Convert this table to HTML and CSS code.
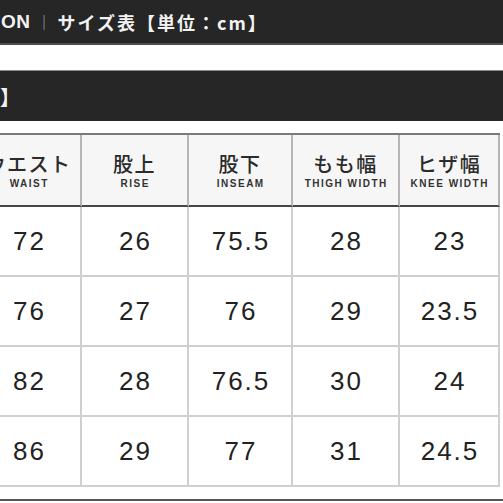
FILE: index.html
```html
<!DOCTYPE html>
<html lang="ja">
<head>
<meta charset="utf-8">
<link rel="stylesheet" href="styles.css">
</head>
<body>
<div class="page">
  <div class="topbar"><span class="brand">ON</span><span class="sep">｜</span><span class="title">サイズ表【単位：cm】</span></div>
  <div class="band"></div>
  <div class="bar2"><span class="bracket">】</span></div>
  <div class="table">
    <div class="cell head"><span class="jp">ウエスト</span><span class="en">WAIST</span></div>
    <div class="cell head"><span class="jp">股上</span><span class="en">RISE</span></div>
    <div class="cell head"><span class="jp">股下</span><span class="en">INSEAM</span></div>
    <div class="cell head"><span class="jp">もも幅</span><span class="en">THIGH WIDTH</span></div>
    <div class="cell head last"><span class="jp">ヒザ幅</span><span class="en">KNEE WIDTH</span></div>

    <div class="cell num">72</div>
    <div class="cell num">26</div>
    <div class="cell num">75.5</div>
    <div class="cell num">28</div>
    <div class="cell num last">23</div>

    <div class="cell num">76</div>
    <div class="cell num">27</div>
    <div class="cell num">76</div>
    <div class="cell num">29</div>
    <div class="cell num last">23.5</div>

    <div class="cell num">82</div>
    <div class="cell num">28</div>
    <div class="cell num">76.5</div>
    <div class="cell num">30</div>
    <div class="cell num last">24</div>

    <div class="cell num">86</div>
    <div class="cell num">29</div>
    <div class="cell num">77</div>
    <div class="cell num">31</div>
    <div class="cell num last">24.5</div>
  </div>
  <div class="footline"></div>
</div>
</body>
</html>
```
FILE: styles.css
```css
html, body {
  margin: 0;
  padding: 0;
  background: #ffffff;
  overflow: hidden;
}
.page {
  width: 503px;
  height: 503px;
  overflow: hidden;
  font-family: "Liberation Sans", "Noto Sans CJK JP", sans-serif;
}
.topbar {
  height: 43px;
  background: #262626;
  border-bottom: 2px solid #4d4d4d;
  display: flex;
  align-items: center;
  color: #f2f2f2;
  font-family: "Noto Sans CJK JP", sans-serif;
  font-weight: 700;
  font-size: 18px;
  white-space: nowrap;
}
.brand {
  font-family: "Liberation Sans", sans-serif;
  font-weight: 700;
  font-size: 19px;
  letter-spacing: 0.5px;
  margin-left: 1px;
}
.sep {
  color: #bbbbbb;
  font-weight: 300;
  font-size: 15px;
  margin: 0 6px 0 6px;
}
.title {
  letter-spacing: 2px;
}
.band {
  height: 25px;
  background: #ffffff;
}
.bar2 {
  height: 50px;
  background: #262626;
  border-top: 1px solid #8a8a8a;
  display: flex;
  align-items: center;
  color: #f2f2f2;
  font-family: "Noto Sans CJK JP", sans-serif;
  font-weight: 700;
  font-size: 20px;
}
.bracket {
  margin-left: 0;
}
.table {
  margin-top: 12px;
  margin-left: -23px;
  width: 523px;
  display: grid;
  grid-template-columns: 105px 107px 104px 107px 100px;
  grid-template-rows: 72px repeat(4, 70px);
  border-top: 2px solid #7a7a7a;
}
.cell {
  box-sizing: border-box;
  border-right: 2px solid #cfcfcf;
  border-bottom: 2px solid #cfcfcf;
  display: flex;
  align-items: center;
  justify-content: center;
}
.head {
  background: #f6f6f6;
  flex-direction: column;
  border-right-color: #b5b5b5;
  border-bottom-color: #464646;
  gap: 3px;
}
.jp {
  font-family: "Noto Sans CJK JP", sans-serif;
  font-size: 20px;
  font-weight: 500;
  letter-spacing: 1.5px;
  color: #2b2b2b;
  line-height: 22px;
  padding-top: 2px;
}
.en {
  font-family: "Liberation Sans", sans-serif;
  font-size: 10px;
  font-weight: 700;
  letter-spacing: 1.5px;
  color: #333333;
  line-height: 11px;
  padding-left: 1.5px;
}
.num {
  font-size: 26px;
  letter-spacing: 2px;
  color: #222222;
  padding-left: 2px;
}
.footline {
  margin-top: 12px;
  height: 2px;
  background: #555555;
}
```
